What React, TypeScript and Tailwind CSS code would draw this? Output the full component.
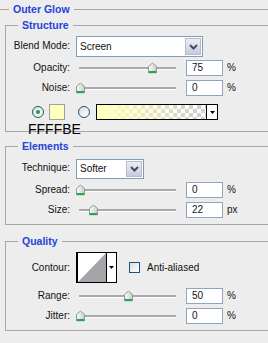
import React from "react";

const Thumb = ({ f }: { f: number }) => (
  <svg
    width="9"
    height="11"
    viewBox="0 0 9 11"
    className="absolute top-1/2 -translate-y-1/2"
    style={{ left: f * 97 - 0.5 }}
  >
    <defs>
      <linearGradient id="thumbg" x1="0" y1="0" x2="1" y2="0">
        <stop offset="0" stopColor="#fbfbfb" />
        <stop offset="1" stopColor="#c9ced0" />
      </linearGradient>
    </defs>
    <path d="M0.5 4 L4.5 0.5 L8.5 4 L8.5 10.5 L0.5 10.5 Z" fill="url(#thumbg)" stroke="#8d9a92" strokeWidth="1" />
    <rect x="1" y="8.5" width="7" height="2" fill="#22a845" />
  </svg>
);

const Chevron = () => (
  <svg width="9" height="6" viewBox="0 0 9 6">
    <path d="M1 1 L4.5 4.5 L8 1" fill="none" stroke="#3e4d6b" strokeWidth="2" />
  </svg>
);

const DownTri = () => (
  <svg width="5" height="3" viewBox="0 0 5 3">
    <path d="M0 0 L5 0 L2.5 3 Z" fill="#000" />
  </svg>
);

const Label = ({ children }: { children: React.ReactNode }) => (
  <div className="w-[65px] text-right pr-[1px] shrink-0">{children}</div>
);

const Select = ({ text, w }: { text: string; w: string }) => (
  <div className={`${w} h-full ml-[5px] border border-[#7f9db9] bg-white flex items-stretch`}>
    <div className="flex-1 pl-[3px] flex items-center">{text}</div>
    <div className="w-[16px] m-[1px] border border-[#b5bdcd] bg-[linear-gradient(#eceef4,#c6ccda)] flex items-center justify-center">
      <Chevron />
    </div>
  </div>
);

const SliderRow = ({
  label,
  value,
  f,
  unit,
  cls,
}: {
  label: string;
  value: string;
  f: number;
  unit: string;
  cls: string;
}) => (
  <div className={`flex items-center h-[16px] ${cls}`}>
    <Label>{label}</Label>
    <div className="ml-[5px] w-[110px] h-full relative flex items-center pl-[3px] shrink-0">
      <div className="w-[97px] h-[2px] bg-[#a9a9a9] shadow-[0_1px_0_#ffffff]" />
      <Thumb f={f} />
    </div>
    <div className="w-[37px] h-full border border-[#8fa6bf] bg-white pl-[5px] flex items-center shrink-0">
      {value}
    </div>
    <span className="ml-[4px]">{unit}</span>
  </div>
);

const Legend = ({ children }: { children: React.ReactNode }) => (
  <legend className="ml-[12px] px-[4px] text-[10.5px] font-bold leading-[16px] text-[#2443d9]">
    {children}
  </legend>
);

const Radio = ({ on }: { on?: boolean }) => (
  <div className="w-[12px] h-[12px] rounded-full border border-[#1d5281] bg-[linear-gradient(135deg,#dcdcd6,#ffffff)] flex items-center justify-center shrink-0">
    {on && <div className="w-[4px] h-[4px] rounded-full bg-[#21a121]" />}
  </div>
);

export default function App() {
  return (
    <div className="w-[268px] h-[343px] bg-[#ededed] overflow-hidden relative pt-[1px] text-[10px] leading-[12px] text-[#111] font-['Liberation_Sans',Arial,sans-serif]">
      <fieldset className="-ml-[4px] w-[320px] border border-[#a7a7a7] pb-[20px]">
        <Legend>Outer Glow</Legend>

        <fieldset className="ml-[8px] w-[300px] border border-[#a7a7a7] pb-[11px]">
          <Legend>Structure</Legend>
          <div className="mt-[3px] h-[21px] flex items-center">
            <Label>
              <span className="relative -top-[1px]">Blend Mode:</span>
            </Label>
            <Select text="Screen" w="w-[127px]" />
          </div>
          <SliderRow label="Opacity:" value="75" f={0.75} unit="%" cls="mt-[3px]" />
          <SliderRow label="Noise:" value="0" f={0} unit="%" cls="mt-[4px]" />
          <div className="mt-[8px] h-[16px] flex items-center pl-[26px]">
            <Radio on />
            <div className="ml-[5px] w-[16px] h-[16px] border border-[#a0a0a0] bg-[#ffffbe] shrink-0" />
            <div className="ml-[13px]">
              <Radio />
            </div>
            <div className="ml-[6px] w-[122px] h-[16px] border border-black flex shrink-0">
              <div className="flex-1 relative bg-[conic-gradient(#d2d2d2_25%,#ffffff_0_50%,#d2d2d2_0_75%,#ffffff_0)] bg-[length:8px_8px]">
                <div className="absolute inset-0 bg-[linear-gradient(to_right,#ffffbe_5%,rgba(255,255,190,0)_85%)]" />
              </div>
              <div className="w-[11px] border-l border-black bg-white flex items-center justify-center">
                <DownTri />
              </div>
            </div>
          </div>
        </fieldset>

        <fieldset className="mt-[6px] ml-[8px] w-[300px] border border-[#a7a7a7] pb-[6px]">
          <Legend>Elements</Legend>
          <div className="mt-[5px] h-[20px] flex items-center">
            <Label>
              <span className="relative -top-[1px]">Technique:</span>
            </Label>
            <Select text="Softer" w="w-[68px]" />
          </div>
          <SliderRow label="Spread:" value="0" f={0} unit="%" cls="mt-[3px]" />
          <SliderRow label="Size:" value="22" f={0.139} unit="px" cls="mt-[4px]" />
        </fieldset>

        <fieldset className="mt-[8px] ml-[8px] w-[300px] border border-[#a7a7a7] pb-[6px]">
          <Legend>Quality</Legend>
          <div className="mt-[3px] h-[31px] flex items-center">
            <Label>Contour:</Label>
            <div className="ml-[5px] w-[41px] h-[31px] border border-black border-l-2 bg-white flex shrink-0">
              <svg width="28" height="29" viewBox="0 0 28 29" className="shrink-0">
                <polygon points="0,29 28,0 28,29" fill="#a4a4a9" />
              </svg>
              <div className="flex-1 border-l border-black flex items-center justify-center">
                <DownTri />
              </div>
            </div>
            <div className="ml-[12px] w-[11px] h-[11px] border border-[#1d5281] bg-[linear-gradient(135deg,#dcdcd6,#ffffff)] shrink-0" />
            <span className="ml-[7px]">Anti-aliased</span>
          </div>
          <SliderRow label="Range:" value="50" f={0.5} unit="%" cls="mt-[5px]" />
          <SliderRow label="Jitter:" value="0" f={0} unit="%" cls="mt-[4px]" />
        </fieldset>
      </fieldset>

      <div className="absolute left-[28px] top-[121px] text-[14px] leading-[16px] text-black">FFFFBE</div>
    </div>
  );
}
